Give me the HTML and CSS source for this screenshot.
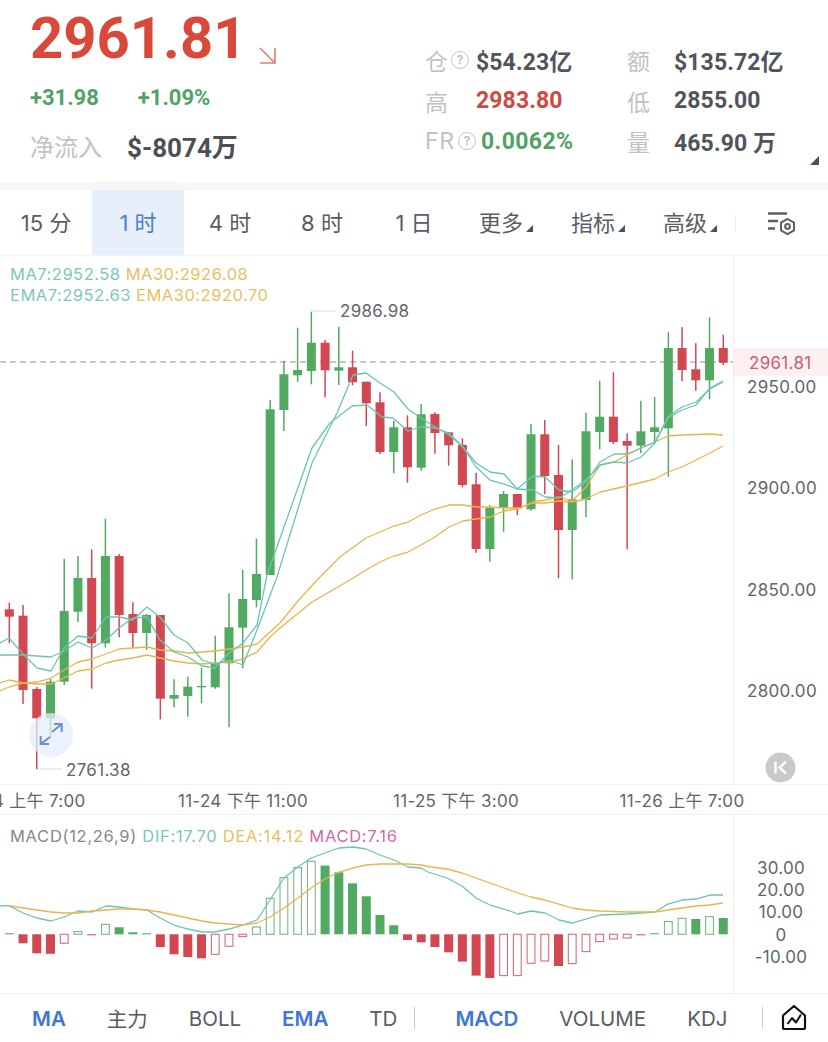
FILE: index.html
```html
<!DOCTYPE html>
<html lang="zh-CN">
<head>
  <meta charset="UTF-8">
  <title>ETH 1时 K线</title>
  <link rel="stylesheet" href="styles.css">
</head>
<body>
  <!-- Ticker -->
  <header class="ticker">
    <div class="summary">
      <div class="last-price">
        <span class="price">2961.81</span>
        <svg class="price-arrow" width="18" height="17" viewBox="0 0 18 17"><path d="M1 1L16 16M16 1V16H1"/></svg>
      </div>
      <div class="change">
        <span>+31.98</span>
        <span>+1.09%</span>
      </div>
      <div class="inflow">
        <span class="label">净流入</span>
        <span class="value">$-8074万</span>
      </div>
    </div>
    <div class="stats">
      <div class="stat"><span class="label">仓<i class="help">?</i></span><span class="value">$54.23亿</span></div>
      <div class="stat stat-right"><span class="label">额</span><span class="value">$135.72亿</span></div>
      <div class="stat"><span class="label">高</span><span class="value up">2983.80</span></div>
      <div class="stat stat-right"><span class="label">低</span><span class="value">2855.00</span></div>
      <div class="stat"><span class="label fr">FR<i class="help">?</i></span><span class="value down">0.0062%</span></div>
      <div class="stat stat-right"><span class="label">量</span><span class="value">465.90 万</span></div>
    </div>
    <span class="corner"></span>
  </header>

  <!-- Periods -->
  <nav class="tabs">
    <a class="tab">15 分</a>
    <a class="tab active">1 时</a>
    <a class="tab">4 时</a>
    <a class="tab">8 时</a>
    <a class="tab">1 日</a>
    <a class="tab menu">更多</a>
    <a class="tab menu">指标</a>
    <a class="tab menu">高级</a>
    <span class="tab-line"></span>
    <svg class="settings" width="30" height="26" viewBox="0 0 30 26">
      <path class="settings-bars" d="M1 2.5H20M1 10H11M1 17.5H8"/>
      <path class="settings-nut" d="M20.5 8L27 11.7V19.3L20.5 23L14 19.3V11.7Z"/>
      <circle class="settings-nut" cx="20.5" cy="15.5" r="2.4"/>
    </svg>
  </nav>

  <!-- Main chart -->
  <section class="pane price-pane">
    <div class="legend">
      <div><span class="teal">MA7:2952.58</span> <span class="gold">MA30:2926.08</span></div>
      <div><span class="teal">EMA7:2952.63</span> <span class="gold">EMA30:2920.70</span></div>
    </div>
    <svg class="chart" width="828" height="528" viewBox="0 256 828 528">
      <line class="axis-line" x1="733.5" y1="256" x2="733.5" y2="784"/>
      <line class="last-line" x1="0" y1="362" x2="733" y2="362"/>
      <g id="candles"></g>
      <g id="lines"></g>
      <path class="mark" d="M311 311H336M37 769H62"/>
      <text class="tick" x="340" y="317">2986.98</text>
      <text class="tick" x="66" y="775.5">2761.38</text>
      <rect class="last-tag" x="734" y="348" width="94" height="28"/>
      <text class="tick last-text" x="749" y="369">2961.81</text>
      <text class="tick" x="747" y="393">2950.00</text>
      <text class="tick" x="747" y="494">2900.00</text>
      <text class="tick" x="747" y="596">2850.00</text>
      <text class="tick" x="747" y="697">2800.00</text>
      <circle class="expand-bg" cx="51" cy="735" r="22"/>
      <path class="expand-arrows" d="M52 732L61.7 724M54 724H61.7V732M50 737L40.7 744M40.7 736V744H49"/>
      <circle class="reset-bg" cx="780.5" cy="767.5" r="15"/>
      <path class="reset-icon" d="M775.5 761.5V773.5M786 761.5L779.5 767.5L786 773.5"/>
    </svg>
  </section>

  <!-- Time axis -->
  <div class="time-axis">
    <svg class="chart" width="828" height="29" viewBox="0 0 828 29">
      <text class="tick" x="23" y="22" text-anchor="middle">11-24 上午 7:00</text>
      <text class="tick" x="243" y="22" text-anchor="middle">11-24 下午 11:00</text>
      <text class="tick" x="456" y="22" text-anchor="middle">11-25 下午 3:00</text>
      <text class="tick" x="682" y="22" text-anchor="middle">11-26 上午 7:00</text>
    </svg>
  </div>

  <!-- MACD -->
  <section class="pane macd-pane">
    <div class="legend macd-legend">
      <span class="gray">MACD(12,26,9)</span> <span class="teal">DIF:17.70</span> <span class="gold">DEA:14.12</span> <span class="pink">MACD:7.16</span>
    </div>
    <svg class="chart" width="828" height="178" viewBox="0 815 828 178">
      <line class="axis-line" x1="733.5" y1="815" x2="733.5" y2="993"/>
      <g id="macd-bars"></g>
      <g id="macd-lines"></g>
      <text class="tick" x="781" y="874" text-anchor="middle">30.00</text>
      <text class="tick" x="781" y="896" text-anchor="middle">20.00</text>
      <text class="tick" x="781" y="918" text-anchor="middle">10.00</text>
      <text class="tick" x="781" y="941" text-anchor="middle">0</text>
      <text class="tick" x="781" y="963" text-anchor="middle">-10.00</text>
    </svg>
  </section>

  <!-- Indicators -->
  <footer class="indicators">
    <a class="ind on">MA</a>
    <a class="ind">主力</a>
    <a class="ind">BOLL</a>
    <a class="ind on">EMA</a>
    <a class="ind">TD</a>
    <span class="ind-line"></span>
    <a class="ind on">MACD</a>
    <a class="ind">VOLUME</a>
    <a class="ind">KDJ</a>
    <span class="ind-line last"></span>
    <svg class="draw-icon" width="26" height="28" viewBox="0 0 26 28">
      <path class="draw-house" d="M13 2L24 11.500V23.500Q24 25 22.500 25H3.500Q2 25 2 23.500V11.500Z"/>
      <path class="draw-zig" d="M6.500 20L11 14L15 18.500L20 10.500"/>
    </svg>
  </footer>

  <script src="chart.js"></script>
</body>
</html>
```

FILE: styles.css
```css
* {
  box-sizing: border-box;
  margin: 0;
  padding: 0;
}
body {
  width: 828px;
  height: 1042px;
  overflow: hidden;
  background-color: #fff;
  font-family: Roboto, "Noto Sans CJK SC", sans-serif;
  color: #50555c;
}

/* Ticker */
.ticker {
  position: relative;
  display: flex;
  height: 182px;
}
.summary {
  width: 425px;
  padding: 3px 0 0 30px;
}
.last-price {
  display: flex;
  align-items: flex-start;
  height: 70px;
}
.price {
  font-size: 58px;
  line-height: 70px;
  font-weight: 700;
  color: #d8493a;
}
.price-arrow {
  margin: 44px 0 0 13px;
}
.price-arrow path {
  fill: none;
  stroke: #e27b74;
  stroke-width: 1.6;
}
.change {
  display: flex;
  gap: 39px;
  margin-top: 10px;
  font-size: 22px;
  line-height: 30px;
  font-weight: 700;
  color: #52a268;
}
.inflow {
  display: flex;
  align-items: center;
  gap: 25px;
  margin-top: 18px;
}
.inflow .label {
  font-size: 24px;
  line-height: 34px;
  color: #bfc3c7;
}
.inflow .value {
  font-size: 26px;
  line-height: 34px;
  font-weight: 700;
  color: #4b5057;
}
.stats {
  display: grid;
  grid-template-columns: 202px 1fr;
  grid-auto-rows: 40.5px;
  padding-top: 40px;
  width: 403px;
}
.stat {
  display: flex;
  align-items: center;
}
.stat .label {
  display: flex;
  align-items: center;
  min-width: 51px;
  font-size: 23px;
  color: #bfc3c7;
}
.stat .label.fr {
  font-size: 24px;
  letter-spacing: 1px;
  min-width: 56px;
}
.stat-right .label {
  min-width: 47px;
}
.stat .value {
  font-size: 23px;
  font-weight: 700;
  letter-spacing: 0.1px;
  color: #50555c;
}
.stat .value.up {
  color: #d0483f;
}
.stat .value.down {
  color: #52a268;
  letter-spacing: 0.4px;
}
.help {
  display: inline-block;
  width: 18px;
  height: 18px;
  margin-left: 3px;
  border: 1.5px solid #c3c6ca;
  border-radius: 50%;
  font-size: 13px;
  line-height: 15px;
  letter-spacing: 0;
  font-style: normal;
  font-weight: 700;
  text-align: center;
  color: #bfc3c7;
}
.corner {
  position: absolute;
  right: 9px;
  bottom: 17px;
  border-style: solid;
  border-width: 0 0 9px 9px;
  border-color: transparent transparent #4b5057 transparent;
}

/* Periods */
.tabs {
  display: flex;
  align-items: center;
  height: 74px;
  border-top: 8px solid #f5f6f7;
  border-bottom: 1px solid #f2f3f4;
}
.tab {
  display: flex;
  align-items: center;
  justify-content: center;
  width: 92px;
  height: 100%;
  padding-bottom: 4px;
  font-family: Inter, "Noto Sans CJK SC", sans-serif;
  font-size: 22px;
  color: #585d63;
}
.tab.active {
  background-color: #e6effa;
  color: #4b7fd0;
}
.tab.menu::after {
  content: "";
  align-self: center;
  margin: 15px 0 0 3px;
  border-style: solid;
  border-width: 0 0 7px 7px;
  border-color: transparent transparent #4b5057 transparent;
}
.tab-line {
  width: 1px;
  height: 16px;
  margin-left: -1px;
  background-color: #eceded;
}
.settings {
  margin: 2px 0 0 31px;
}
.settings-bars {
  fill: none;
  stroke: #5b6068;
  stroke-width: 2.600;
}
.settings-nut {
  fill: none;
  stroke: #5b6068;
  stroke-width: 2;
}

/* Charts */
.pane {
  position: relative;
}
.price-pane {
  height: 528px;
}
.macd-pane {
  height: 178px;
}
.chart {
  display: block;
}
.time-axis {
  height: 31px;
  border-top: 1px solid #f0f1f2;
  border-bottom: 1px solid #f0f1f2;
}
.legend {
  position: absolute;
  top: 8px;
  left: 10px;
  font-family: Inter, sans-serif;
  font-size: 16.500px;
  line-height: 21px;
  letter-spacing: 0.5px;
}
.macd-legend {
  top: 11px;
  letter-spacing: 0.7px;
  white-space: nowrap;
}
.teal {
  color: #7cc8b8;
}
.gold {
  color: #e8bf62;
}
.gray {
  color: #85888c;
}
.pink {
  color: #cc6aa8;
}
.tick {
  font-family: Inter, "Noto Sans CJK SC", sans-serif;
  font-size: 17px;
  letter-spacing: 0.3px;
  fill: #62666b;
}
.axis-line {
  stroke: #eff0f1;
  stroke-width: 1;
}
.last-line {
  stroke: #8f8f8f;
  stroke-width: 1;
  stroke-dasharray: 6 4;
}
.last-tag {
  fill: #fcf1f0;
}
.last-text {
  fill: #c9606c;
}
.mark {
  fill: none;
  stroke: #dcdcdc;
  stroke-width: 1;
}
.expand-bg {
  fill: #e4edfa;
  fill-opacity: 0.75;
}
.expand-arrows {
  fill: none;
  stroke: #6c8fd2;
  stroke-width: 2;
}
.reset-bg {
  fill: #c7c9cb;
}
.reset-icon {
  fill: none;
  stroke: #fff;
  stroke-width: 2.400;
}

/* Indicators */
.indicators {
  display: flex;
  align-items: center;
  gap: 41px;
  height: 49px;
  padding-left: 32px;
  border-top: 1px solid #f0f1f2;
  font-family: Inter, "Noto Sans CJK SC", sans-serif;
  font-size: 20.500px;
  color: #585d63;
}
.ind.on {
  font-weight: 600;
  color: #3f76d8;
}
.ind-line {
  width: 1px;
  height: 22px;
  margin: 0 -1px 0 -24px;
  background-color: #c9cbcd;
}
.ind-line.last {
  margin: 0 -23px 0 -6px;
}
.draw-house {
  fill: none;
  stroke: #111;
  stroke-width: 2.200;
  stroke-linejoin: round;
}
.draw-zig {
  fill: none;
  stroke: #111;
  stroke-width: 2;
  stroke-linejoin: round;
}
```

FILE: chart.js
```js
const NS = 'http://www.w3.org/2000/svg';
const GREEN = '#52a962';
const RED = '#d14853';
const TEAL = '#6cc5b3';
const GOLD = '#eab44a';

const STEP = 13.73;
const FIRST_X = 9.3;

// high, low, body top, body bottom, up?
const candles = [
  [602.7, 643, 609.3, 616.7, 0], [605, 704, 615.7, 690, 0], [687, 769.3, 689, 718.3, 0],
  [678, 738, 681.7, 718.3, 1], [558.7, 685, 611, 681.7, 1], [556, 622.3, 578, 611.7, 1],
  [549.3, 688.7, 578, 643.3, 0], [518.7, 647.7, 556, 643.3, 1], [554, 637.3, 556, 615, 0],
  [602.3, 647.7, 614, 633, 0], [614, 650, 615, 633, 1], [615, 719.3, 615, 698.7, 0],
  [679.3, 707.3, 695, 698.7, 1], [676.7, 716.7, 686.7, 696, 1], [667.7, 703.3, 686, 687.3, 1],
  [635.7, 688.7, 663.3, 687.3, 1], [593.3, 727.3, 627.3, 663.3, 1], [570, 668.3, 599, 627.7, 1],
  [538.7, 607.3, 574, 600, 1], [400, 575, 409.3, 575, 1], [360.7, 431, 374.3, 410, 1],
  [327.7, 381.7, 370, 375.3, 1], [311.7, 384.3, 342.7, 371, 1], [340, 397.3, 342.7, 370.3, 0],
  [326.7, 385, 367.3, 370.7, 1], [350.7, 385.3, 367.3, 382.3, 0], [381.7, 426, 381.7, 403.3, 0],
  [392.3, 454, 402.3, 452, 0], [420.7, 473.3, 427.3, 452, 1], [415.3, 482.7, 427.3, 467.3, 0],
  [404, 470.7, 414.3, 467.7, 1], [412.3, 453.7, 414, 433, 0], [432.3, 465.7, 432.3, 445.3, 0],
  [438.3, 487.3, 445, 485, 0], [472.7, 552.7, 484.3, 549, 0], [505, 561.7, 507.7, 549, 1],
  [491, 531.7, 494, 507.7, 1], [494, 515, 494, 508.3, 0], [424, 510.7, 434.3, 509.3, 1],
  [420, 494, 434.3, 476, 0], [445, 578.3, 475, 530, 0], [459.3, 579.3, 499.3, 530, 1],
  [412.7, 517.3, 431.3, 500, 1], [380.7, 449.3, 416.7, 432, 1], [372.3, 444, 416.7, 442, 0],
  [433.3, 549.3, 441, 445.7, 0], [400.7, 453.3, 431.3, 445.7, 1], [397, 443.3, 427.3, 432, 1],
  [332.3, 476.7, 348, 428.3, 1], [327.3, 381.3, 348, 370, 0], [343.3, 390.7, 369.3, 380.3, 0],
  [317.3, 399.3, 348, 380.3, 1], [334.7, 365, 348, 362.7, 0]
];

const ma7 = '0,643 9,638 23,654 37,668 51,671 64,648 78,636 92,638 106,617 119,617 133,620 147,607 160,617 174,635 188,643 202,660 215,664 229,660 243,665 257,630 277,577 312,463 337,413 353,375 366,373 380,383 394,392 408,409 421,418 435,427 449,435 463,447 476,463 490,472 504,474 517,489 533,476 545,477 559,490 572,492 586,482 600,462 614,454 627,454 641,448 655,442 668,417 682,407 696,402 710,389 723,382';
const ema7 = '0,655 23,655 37,656 51,657 64,651 78,642 92,648 106,640 119,628 133,618 147,617 160,640 174,652 188,657 202,666 215,668 229,653 243,643 257,625 267,575 312,448 330,423 352,406 367,405 382,417 393,418 408,431 421,427 435,428 449,433 463,447 476,467 490,480 504,484 517,489 533,490 545,497 559,498 572,490 586,480 600,465 614,462 627,463 641,457 655,443 668,418 682,410 696,405 710,388 723,381';
const ma30 = '0,683 9,680 23,683 37,682 51,678 64,670 78,662 92,659 106,654 119,649 133,648 147,647 160,650 174,651 188,653 202,652 215,651 229,649 243,647 257,644 270,632 280,623 298,601 317,580 340,557 366,538 394,526 408,522 421,515 435,509 449,505 463,505 476,507 490,507 504,508 520,508 533,502 545,500 559,497 572,501 586,487 600,465 614,462 627,455 641,448 655,442 668,436 682,435 710,434 723,435';
const ema30 = '0,691 9,687 23,683 37,684 51,684 64,678 78,671 92,669 106,663 119,660 133,658 147,655 160,658 174,661 188,663 202,664 215,663 229,662 243,659 257,652 270,637 280,628 312,602 350,580 366,570 380,562 394,556 408,552 421,545 435,537 449,527 463,521 476,519 490,517 504,511 517,509 533,503 545,503 559,501 572,502 586,499 600,492 627,486 655,479 668,472 682,467 696,460 710,453 723,446';

// bar height above (+) or below (-) the zero line, h = hollow
const MACD_ZERO = 934.3;
const macd = [
  1, -9, -19, -19.5, '-9h', '2.7h', -1, '10h', 7, 2, 1, -12.7, -20, -22.7, -24, '-20h', '-12h', '-2.3h',
  '7.3h', '36h', '56.7h', '66.7h', '73h', 68.7, 62, 51, 38, 19.3, 9, -5.7, -8, -12.7, -18, -27.3, -41.3, -43.7,
  '-41.3h', '-41.3h', '-29h', '-26.7h', -31.7, '-29.3h', '-17.3h', '-7.3h', '-4.7h', '-3.7h', -1, 1,
  '12.7h', '16h', 15.3, '17.7h', 16.3
];

const dif = '0,906 9,905.700 23,913 37,918 51,921 64,917 78,911 92,912 106,906 119,907 133,909 147,910 160,918 174,925 188,929 202,932 215,932 229,929 243,925 257,920 270,900 284,878 298,867 311,858 325,853 339,848 353,847 366,849 380,855 394,860 408,867 421,868 428,872 447,878 462,886 476,898 490,905 504,909 518,914 531,911 545,913 559,920 572,923 586,919 600,915 627,914 655,912 668,904 682,900 696,899 710,895 723,895';
const dea = '9,905.700 23,908 37,910 51,912 64,913 78,913 92,911 106,910 119,909 133,909 147,910 160,912 174,915 188,918 202,921 215,923 229,924 243,925 257,923 270,917 284,908 298,898 311,888 325,879 339,872 353,868 366,865 380,864 394,864 408,864 421,865 431,867 447,869 462,873 476,878 490,883 504,888 518,893 531,897 545,900 559,904 572,908 586,910 600,911 627,912 655,912 668,910 682,908 696,906 710,905 723,903';

function el(parent, name, attrs) {
  const node = document.createElementNS(NS, name);
  Object.keys(attrs).forEach(key => node.setAttribute(key, attrs[key]));
  parent.appendChild(node);
  return node;
}

function drawLine(parent, points, color) {
  el(parent, 'polyline', { points: points, fill: 'none', stroke: color, 'stroke-width': 1.3, 'stroke-linejoin': 'round' });
}

const candleBox = document.getElementById('candles');
candles.forEach((c, i) => {
  const x = FIRST_X + STEP * i;
  const color = c[4] ? GREEN : RED;
  el(candleBox, 'line', { x1: x, x2: x, y1: c[0], y2: c[1], stroke: color, 'stroke-width': 1.5 });
  el(candleBox, 'rect', { x: x - 4.5, y: c[2], width: 9, height: Math.max(c[3] - c[2], 1.2), fill: color });
});

const lineBox = document.getElementById('lines');
drawLine(lineBox, ma30, GOLD);
drawLine(lineBox, ema30, GOLD);
drawLine(lineBox, ma7, TEAL);
drawLine(lineBox, ema7, TEAL);

const barBox = document.getElementById('macd-bars');
macd.forEach((v, i) => {
  const hollow = typeof v === 'string';
  const h = parseFloat(v);
  const x = FIRST_X + STEP * i;
  const color = h > 0 ? GREEN : RED;
  const top = h > 0 ? MACD_ZERO - h : MACD_ZERO;
  const height = Math.max(Math.abs(h), 1);
  if (hollow) {
    el(barBox, 'rect', { x: x - 3.9, y: top, width: 7.8, height: height, fill: '#fff', stroke: color, 'stroke-width': 1.100, 'stroke-opacity': 0.8 });
  } else {
    el(barBox, 'rect', { x: x - 4.5, y: top, width: 9, height: height, fill: color });
  }
});

const macdLines = document.getElementById('macd-lines');
drawLine(macdLines, dif, TEAL);
drawLine(macdLines, dea, GOLD);
```
